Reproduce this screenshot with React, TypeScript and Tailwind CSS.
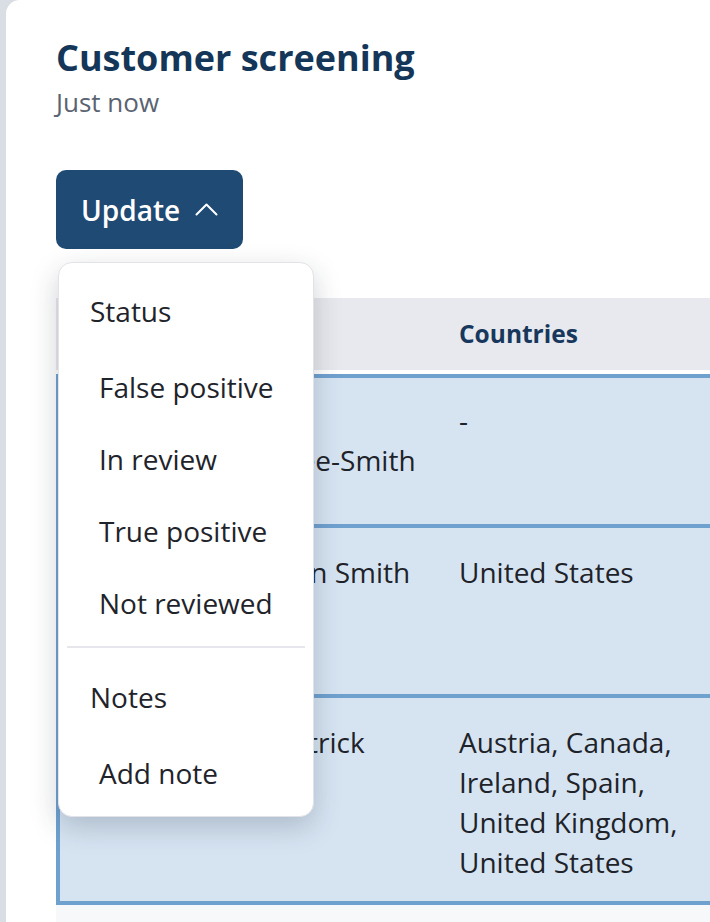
import { ReactNode } from "react";

type Row = {
  name: string[];
  countries: string[];
  height: string;
  pad: string;
};

const rows: Row[] = [
  { name: ["Mary", "Roslyn Lee-Smith"], countries: ["-"], height: "h-[146px]", pad: "pt-[22px]" },
  { name: ["Johnathon Smith"], countries: ["United States"], height: "h-[170px]", pad: "pt-[24px]" },
  { name: ["Owen Patrick"], countries: ["Austria, Canada,", "Ireland, Spain,", "United Kingdom,", "United States"], height: "h-[207px]", pad: "pt-[24px]" },
];

function ChevronUp() {
  return (
    <svg width="23" height="13" viewBox="0 0 23 13" fill="none" stroke="currentColor" strokeWidth="2" strokeLinecap="round" strokeLinejoin="round">
      <path d="M1.5 11.5 L11.5 1.5 L21.5 11.5" />
    </svg>
  );
}

function MenuLabel({ children }: { children: ReactNode }) {
  return <div className="h-[72px] flex items-center pl-[31px] text-[#1f242b]">{children}</div>;
}

function MenuItem({ children }: { children: ReactNode }) {
  return <div className="h-[72px] flex items-center pl-[40px] text-[#1f242b]">{children}</div>;
}

function UpdateMenu() {
  return (
    <div className="absolute left-[2px] top-[92px] w-[256px] h-[555px] bg-white rounded-[14px] border border-[#e2e3e8] shadow-[0_10px_28px_rgba(30,40,60,0.22)] pt-[12px] text-[28px] z-10">
      <MenuLabel>Status</MenuLabel>
      <div className="mt-[4px]">
        <MenuItem>False positive</MenuItem>
        <MenuItem>In review</MenuItem>
        <MenuItem>True positive</MenuItem>
        <MenuItem>Not reviewed</MenuItem>
      </div>
      <div className="mt-[7px] mx-[8px] h-[2px] bg-[#e6e6ec]" />
      <div className="mt-[13px]">
        <MenuLabel>Notes</MenuLabel>
      </div>
      <div className="mt-[4px]">
        <MenuItem>Add note</MenuItem>
      </div>
    </div>
  );
}

export default function App() {
  return (
    <div className="min-h-screen bg-[linear-gradient(90deg,#d9dee4,#e6e9ed)] pl-[6px] flex" style={{ fontFamily: '"Open Sans", "Noto Sans", sans-serif' }}>
      <div className="flex-1 bg-white rounded-tl-[14px] pt-[34px] pl-[50px] overflow-hidden min-h-screen">
        <h1 className="text-[36px] leading-[48px] font-bold text-[#143658]">Customer screening</h1>
        <div className="mt-[4px] text-[26px] leading-[32px] text-[#5a6371]">Just now</div>

        <div className="relative mt-[52px]">
          <button className="h-[79px] w-[187px] rounded-[10px] bg-[#1f4a73] text-white flex items-center pl-[25px] gap-[15px]">
            <span className="text-[28px] font-semibold">Update</span>
            <ChevronUp />
          </button>
          <UpdateMenu />

          <div className="mt-[49px] bg-[#f7f8fa] pb-[40px]">
            <div className="h-[72px] bg-[#e8e9ee] grid grid-cols-[387px_1fr] items-center">
              <div />
              <div className="pl-[16px] text-[24.5px] font-bold text-[#17385c]">Countries</div>
            </div>
            <div className="h-[4px] bg-white" />
            <div className="border-4 border-r-0 border-[#6fa1cf] bg-[#d6e4f2] text-[28px] leading-[40px] text-[#1e2329]">
              {rows.map((r, i) => (
                <div key={i} className={`grid grid-cols-[132px_251px_1fr] ${r.height} ${r.pad} ${i > 0 ? "border-t-4 border-[#6fa1cf]" : ""}`}>
                  <div />
                  <div>
                    {r.name.map((n) => (
                      <div key={n} className="whitespace-nowrap">{n}</div>
                    ))}
                  </div>
                  <div className="pl-[16px]">
                    {r.countries.map((c) => (
                      <div key={c} className="whitespace-nowrap">{c}</div>
                    ))}
                  </div>
                </div>
              ))}
            </div>
          </div>
        </div>
      </div>
    </div>
  );
}
